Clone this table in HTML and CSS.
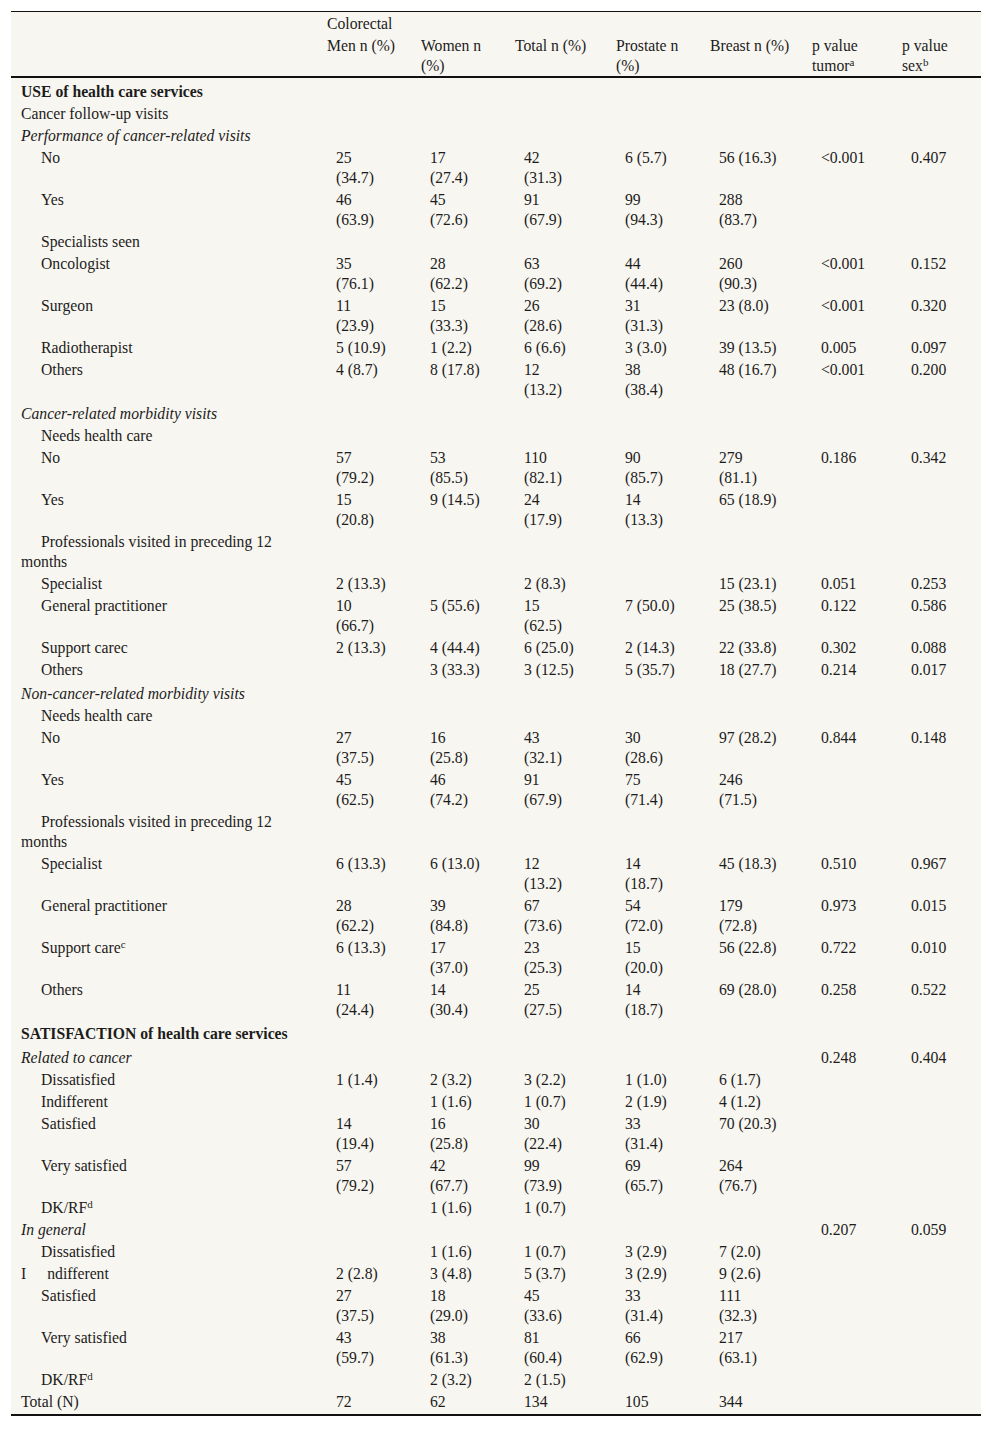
FILE: index.html
```html
<!DOCTYPE html>
<html lang="en">
<head>
<meta charset="utf-8">
<title>Use and satisfaction of health care services</title>
<link rel="stylesheet" href="styles.css">
</head>
<body>
<table class="t">
<colgroup>
<col class="c-lab"><col class="c-men"><col class="c-wom"><col class="c-tot"><col class="c-pro"><col class="c-bre"><col class="c-pt"><col class="c-ps">
</colgroup>
<thead>
<tr class="h1"><th></th><th class="nw">Colorectal</th><th></th><th></th><th></th><th></th><th></th><th></th></tr>
<tr class="h2"><th></th><th>Men n (%)</th><th>Women n<br>(%)</th><th>Total n (%)</th><th>Prostate n<br>(%)</th><th>Breast n (%)</th><th>p value<br>tumor<sup>a</sup></th><th>p value<br>sex<sup>b</sup></th></tr>
</thead>
<tbody>
<tr class="first"><td class="lab sec">USE of health care services</td><td></td><td></td><td></td><td></td><td></td><td></td><td></td></tr>
<tr><td class="lab">Cancer follow-up visits</td><td></td><td></td><td></td><td></td><td></td><td></td><td></td></tr>
<tr><td class="lab sub">Performance of cancer-related visits</td><td></td><td></td><td></td><td></td><td></td><td></td><td></td></tr>
<tr><td class="lab i1">No</td><td>25<br>(34.7)</td><td>17<br>(27.4)</td><td>42<br>(31.3)</td><td>6 (5.7)</td><td>56 (16.3)</td><td>&lt;0.001</td><td>0.407</td></tr>
<tr><td class="lab i1">Yes</td><td>46<br>(63.9)</td><td>45<br>(72.6)</td><td>91<br>(67.9)</td><td>99<br>(94.3)</td><td>288<br>(83.7)</td><td></td><td></td></tr>
<tr><td class="lab i1">Specialists seen</td><td></td><td></td><td></td><td></td><td></td><td></td><td></td></tr>
<tr><td class="lab i1">Oncologist</td><td>35<br>(76.1)</td><td>28<br>(62.2)</td><td>63<br>(69.2)</td><td>44<br>(44.4)</td><td>260<br>(90.3)</td><td>&lt;0.001</td><td>0.152</td></tr>
<tr><td class="lab i1">Surgeon</td><td>11<br>(23.9)</td><td>15<br>(33.3)</td><td>26<br>(28.6)</td><td>31<br>(31.3)</td><td>23 (8.0)</td><td>&lt;0.001</td><td>0.320</td></tr>
<tr><td class="lab i1">Radiotherapist</td><td>5 (10.9)</td><td>1 (2.2)</td><td>6 (6.6)</td><td>3 (3.0)</td><td>39 (13.5)</td><td>0.005</td><td>0.097</td></tr>
<tr><td class="lab i1">Others</td><td>4 (8.7)</td><td>8 (17.8)</td><td>12<br>(13.2)</td><td>38<br>(38.4)</td><td>48 (16.7)</td><td>&lt;0.001</td><td>0.200</td></tr>
<tr class="gap"><td class="lab sub">Cancer-related morbidity visits</td><td></td><td></td><td></td><td></td><td></td><td></td><td></td></tr>
<tr><td class="lab i1">Needs health care</td><td></td><td></td><td></td><td></td><td></td><td></td><td></td></tr>
<tr><td class="lab i1">No</td><td>57<br>(79.2)</td><td>53<br>(85.5)</td><td>110<br>(82.1)</td><td>90<br>(85.7)</td><td>279<br>(81.1)</td><td>0.186</td><td>0.342</td></tr>
<tr><td class="lab i1">Yes</td><td>15<br>(20.8)</td><td>9 (14.5)</td><td>24<br>(17.9)</td><td>14<br>(13.3)</td><td>65 (18.9)</td><td></td><td></td></tr>
<tr><td class="lab hang">Professionals visited in preceding 12<br>months</td><td></td><td></td><td></td><td></td><td></td><td></td><td></td></tr>
<tr><td class="lab i1">Specialist</td><td>2 (13.3)</td><td></td><td>2 (8.3)</td><td></td><td>15 (23.1)</td><td>0.051</td><td>0.253</td></tr>
<tr><td class="lab i1">General practitioner</td><td>10<br>(66.7)</td><td>5 (55.6)</td><td>15<br>(62.5)</td><td>7 (50.0)</td><td>25 (38.5)</td><td>0.122</td><td>0.586</td></tr>
<tr><td class="lab i1">Support carec</td><td>2 (13.3)</td><td>4 (44.4)</td><td>6 (25.0)</td><td>2 (14.3)</td><td>22 (33.8)</td><td>0.302</td><td>0.088</td></tr>
<tr><td class="lab i1">Others</td><td></td><td>3 (33.3)</td><td>3 (12.5)</td><td>5 (35.7)</td><td>18 (27.7)</td><td>0.214</td><td>0.017</td></tr>
<tr class="gap"><td class="lab sub">Non-cancer-related morbidity visits</td><td></td><td></td><td></td><td></td><td></td><td></td><td></td></tr>
<tr><td class="lab i1">Needs health care</td><td></td><td></td><td></td><td></td><td></td><td></td><td></td></tr>
<tr><td class="lab i1">No</td><td>27<br>(37.5)</td><td>16<br>(25.8)</td><td>43<br>(32.1)</td><td>30<br>(28.6)</td><td>97 (28.2)</td><td>0.844</td><td>0.148</td></tr>
<tr><td class="lab i1">Yes</td><td>45<br>(62.5)</td><td>46<br>(74.2)</td><td>91<br>(67.9)</td><td>75<br>(71.4)</td><td>246<br>(71.5)</td><td></td><td></td></tr>
<tr><td class="lab hang">Professionals visited in preceding 12<br>months</td><td></td><td></td><td></td><td></td><td></td><td></td><td></td></tr>
<tr><td class="lab i1">Specialist</td><td>6 (13.3)</td><td>6 (13.0)</td><td>12<br>(13.2)</td><td>14<br>(18.7)</td><td>45 (18.3)</td><td>0.510</td><td>0.967</td></tr>
<tr><td class="lab i1">General practitioner</td><td>28<br>(62.2)</td><td>39<br>(84.8)</td><td>67<br>(73.6)</td><td>54<br>(72.0)</td><td>179<br>(72.8)</td><td>0.973</td><td>0.015</td></tr>
<tr><td class="lab i1">Support care<sup>c</sup></td><td>6 (13.3)</td><td>17<br>(37.0)</td><td>23<br>(25.3)</td><td>15<br>(20.0)</td><td>56 (22.8)</td><td>0.722</td><td>0.010</td></tr>
<tr><td class="lab i1">Others</td><td>11<br>(24.4)</td><td>14<br>(30.4)</td><td>25<br>(27.5)</td><td>14<br>(18.7)</td><td>69 (28.0)</td><td>0.258</td><td>0.522</td></tr>
<tr class="gap"><td class="lab sec">SATISFACTION of health care services</td><td></td><td></td><td></td><td></td><td></td><td></td><td></td></tr>
<tr class="gap"><td class="lab sub">Related to cancer</td><td></td><td></td><td></td><td></td><td></td><td>0.248</td><td>0.404</td></tr>
<tr><td class="lab i1">Dissatisfied</td><td>1 (1.4)</td><td>2 (3.2)</td><td>3 (2.2)</td><td>1 (1.0)</td><td>6 (1.7)</td><td></td><td></td></tr>
<tr><td class="lab i1">Indifferent</td><td></td><td>1 (1.6)</td><td>1 (0.7)</td><td>2 (1.9)</td><td>4 (1.2)</td><td></td><td></td></tr>
<tr><td class="lab i1">Satisfied</td><td>14<br>(19.4)</td><td>16<br>(25.8)</td><td>30<br>(22.4)</td><td>33<br>(31.4)</td><td>70 (20.3)</td><td></td><td></td></tr>
<tr><td class="lab i1">Very satisfied</td><td>57<br>(79.2)</td><td>42<br>(67.7)</td><td>99<br>(73.9)</td><td>69<br>(65.7)</td><td>264<br>(76.7)</td><td></td><td></td></tr>
<tr><td class="lab i1">DK/RF<sup>d</sup></td><td></td><td>1 (1.6)</td><td>1 (0.7)</td><td></td><td></td><td></td><td></td></tr>
<tr><td class="lab sub">In general</td><td></td><td></td><td></td><td></td><td></td><td>0.207</td><td>0.059</td></tr>
<tr><td class="lab i1">Dissatisfied</td><td></td><td>1 (1.6)</td><td>1 (0.7)</td><td>3 (2.9)</td><td>7 (2.0)</td><td></td><td></td></tr>
<tr><td class="lab">I<span class="split">ndifferent</span></td><td>2 (2.8)</td><td>3 (4.8)</td><td>5 (3.7)</td><td>3 (2.9)</td><td>9 (2.6)</td><td></td><td></td></tr>
<tr><td class="lab i1">Satisfied</td><td>27<br>(37.5)</td><td>18<br>(29.0)</td><td>45<br>(33.6)</td><td>33<br>(31.4)</td><td>111<br>(32.3)</td><td></td><td></td></tr>
<tr><td class="lab i1">Very satisfied</td><td>43<br>(59.7)</td><td>38<br>(61.3)</td><td>81<br>(60.4)</td><td>66<br>(62.9)</td><td>217<br>(63.1)</td><td></td><td></td></tr>
<tr><td class="lab i1">DK/RF<sup>d</sup></td><td></td><td>2 (3.2)</td><td>2 (1.5)</td><td></td><td></td><td></td><td></td></tr>
<tr class="last"><td class="lab">Total (N)</td><td>72</td><td>62</td><td>134</td><td>105</td><td>344</td><td></td><td></td></tr>
</tbody>
</table>
</body>
</html>
```

FILE: styles.css
```css
body {
  margin: 11px;
  background: #ffffff;
  font-family: "Liberation Serif", "Times New Roman", serif;
  font-size: 15.7px;
  color: #1c1c1c;
}

.t {
  width: 970px;
  table-layout: fixed;
  border-collapse: separate;
  border-spacing: 0;
  background: #f8f6f0;
  line-height: 20px;
}

.c-lab { width: 310px; }
.c-men { width: 94px; }
.c-wom { width: 94px; }
.c-tot { width: 101px; }
.c-pro { width: 94px; }
.c-bre { width: 102px; }
.c-pt { width: 90px; }
.c-ps { width: 85px; }

.t th {
  font-weight: normal;
  text-align: left;
  vertical-align: top;
  padding: 2px 0 0 6px;
  white-space: nowrap;
}

.h1 th {
  border-top: 1px solid #111;
}

.h2 th {
  border-bottom: 2px solid #111;
}

.t td {
  vertical-align: top;
  padding: 2px 0 0 15px;
  white-space: nowrap;
}

.t td.lab {
  padding-left: 10px;
}

.t td.i1 {
  padding-left: 30px;
}

.t td.hang {
  text-indent: 20px;
}

.sec {
  font-weight: bold;
}

.sub {
  font-style: italic;
}

.split {
  padding-left: 21px;
}

.first td {
  padding-top: 4px;
}

.gap td {
  padding-top: 4px;
}

.last td {
  padding-bottom: 2px;
  border-bottom: 2px solid #111;
}

sup {
  font-size: 0.7em;
  line-height: 0;
  vertical-align: 0.5em;
}
```
